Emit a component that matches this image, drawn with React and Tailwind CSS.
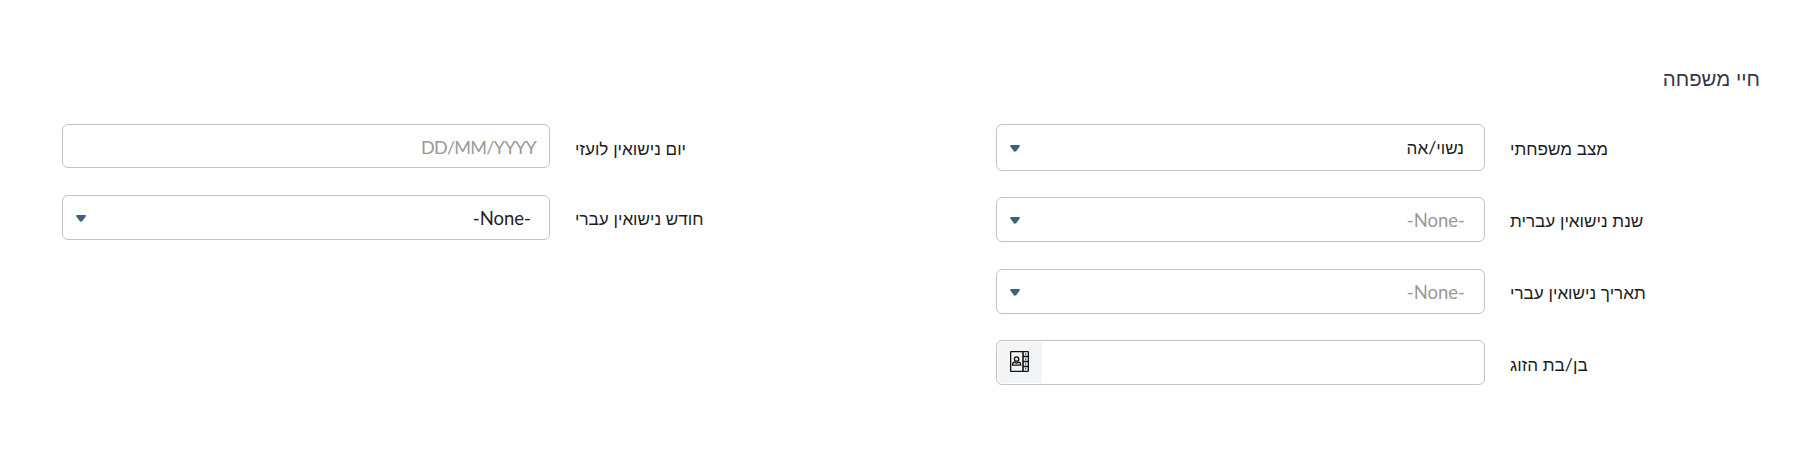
const labelFont = "font-['Liberation_Sans',Arial,sans-serif]";

function Caret() {
  return (
    <svg className="mt-[2px] h-[7px] w-[10px] shrink-0" viewBox="0 0 10 7" fill="#3c617c">
      <path d="M1 0h8c1 0 1.100 1.100.5 1.800L6.100 6.200c-.5.600-1.700.600-2.200 0L.5 1.800C-.1 1.100 0 0 1 0Z" />
    </svg>
  );
}

function ContactBook() {
  return (
    <svg className="mr-[1px] mb-[2px] h-[21px] w-[19px]" viewBox="0 0 19 21" fill="none" stroke="#111">
      <rect x=".65" y=".65" width="17.7" height="19.7" rx=".5" strokeWidth="1.3" />
      <path d="M13 1v19" strokeWidth="1.600" />
      <path d="M13 5.500h5.500M13 10.500h5.500M13 15.500h5.500" strokeWidth="1.5" />
      <path d="M15.700 2.600v1.200M15.700 7.500v1.200M15.700 12.500v1.200M15.700 17.300v1.200" strokeWidth="1.2" />
      <circle cx="6.600" cy="8" r="2.200" strokeWidth="1.300" />
      <path d="M2.600 14.200v-.8c0-1.300.8-2.100 2.100-2.200 1 .8 2.800.8 3.800 0 1.300.1 2.100.9 2.100 2.200v.8z" strokeWidth="1.300" />
    </svg>
  );
}

function Label({ children, className = "ml-[25px] pt-[5px]" }) {
  return (
    <label dir="rtl" className={`whitespace-nowrap text-[17.1px] leading-[24px] text-[#1c1c1c] ${labelFont} ${className}`}>
      {children}
    </label>
  );
}

function Slash() {
  return <span className="font-[Lato,sans-serif] text-[18px] leading-[0]">/</span>;
}

function Select({ children, className = "" }) {
  return (
    <div className={`flex items-center justify-between rounded-[6px] border border-[#c2c2c9] bg-white pr-[20px] pl-[13px] ${className}`}>
      <Caret />
      {children}
    </div>
  );
}

function None({ className = "" }) {
  return <span className={`font-[Lato,sans-serif] text-[18.500px] leading-[24px] ${className}`}>-None-</span>;
}

export default function App() {
  return (
    <main className="h-[457px] w-full bg-white pt-[66px] pl-[62px]">
      <h2 dir="rtl" className={`mr-[33px] h-[58px] text-[20.4px] leading-[26px] font-normal text-[#313949] ${labelFont}`}>
        חיי משפחה
      </h2>
      <div className="flex items-start">
        <section className="flex w-[934px] flex-col gap-[27px]">
          <div className="flex h-[44px] items-center">
            <div className="flex h-[44px] w-[488px] items-center justify-end rounded-[6px] border border-[#c2c2c9] pr-[13px]">
              <span className="pt-px font-[Lato,sans-serif] text-[18px] leading-[24px] tracking-[-0.7px] text-[#999]">DD/MM/YYYY</span>
            </div>
            <Label className="ml-[25px] pt-[8px]">יום נישואין לועזי</Label>
          </div>
          <div className="flex h-[45px] items-center">
            <Select className="h-[45px] w-[488px]"><None className="-mr-[2px] text-[#222]" /></Select>
            <Label className="ml-[25px] pt-[5px]">חודש נישואין עברי</Label>
          </div>
        </section>
        <section className="flex flex-col">
          <div className="mb-[26px] flex h-[47px] items-center">
            <Select className="h-[47px] w-[489px]">
              <span dir="rtl" className={`pt-[3px] text-[17.1px] leading-[24px] text-[#1c1c1c] ${labelFont}`}>נשוי<Slash />אה</span>
            </Select>
            <Label>מצב משפחתי</Label>
          </div>
          <div className="mb-[27px] flex h-[45px] items-center">
            <Select className="h-[45px] w-[489px]"><None className="-mr-px text-[#999]" /></Select>
            <Label>שנת נישואין עברית</Label>
          </div>
          <div className="mb-[26px] flex h-[45px] items-center">
            <Select className="h-[45px] w-[489px]"><None className="-mr-px text-[#999]" /></Select>
            <Label>תאריך נישואין עברי</Label>
          </div>
          <div className="flex h-[45px] items-center">
            <div className="flex h-[45px] w-[489px] rounded-[6px] border border-[#c2c2c9] p-px">
              <button className="flex w-[44px] items-center justify-center rounded-l-[4px] bg-[#f3f4f6]">
                <ContactBook />
              </button>
            </div>
            <Label className="ml-[25px] pt-[6px]">בן<Slash />בת הזוג</Label>
          </div>
        </section>
      </div>
    </main>
  );
}
